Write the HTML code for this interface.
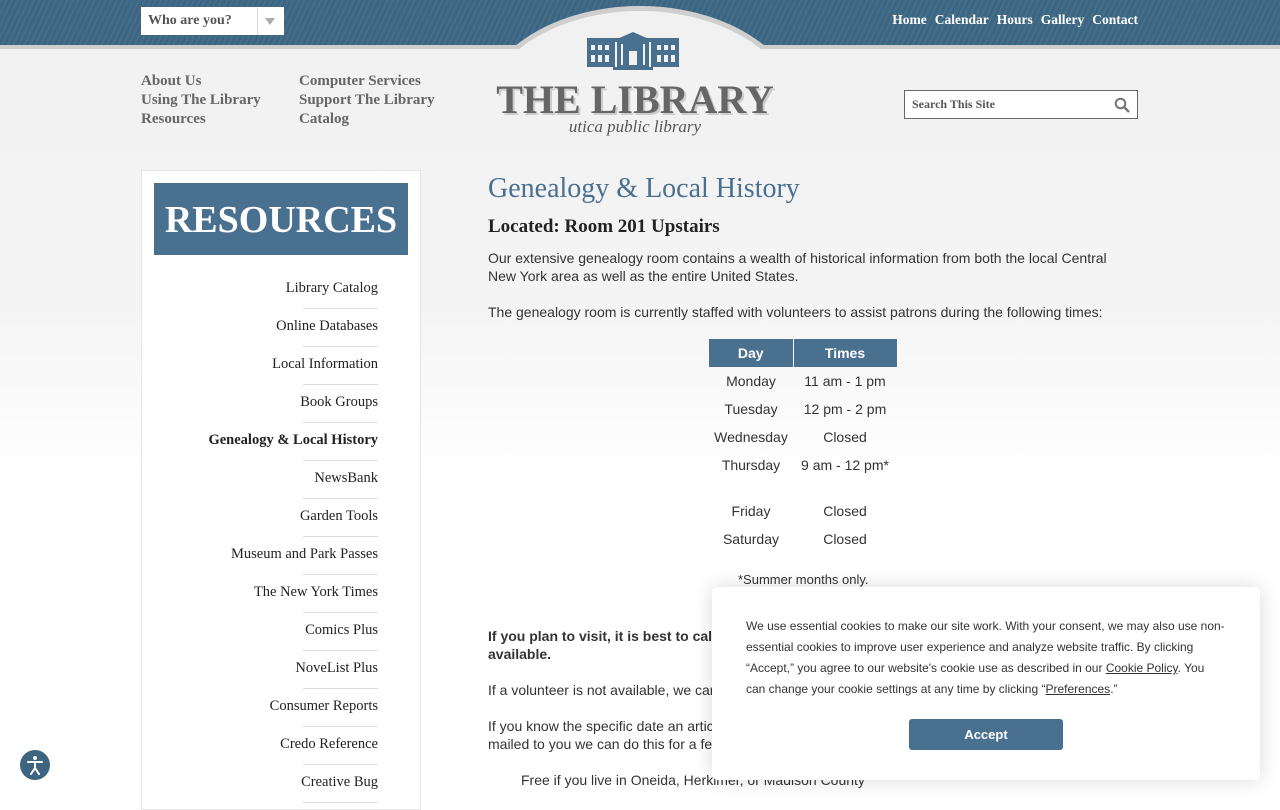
<!DOCTYPE html>
<html><head><meta charset="utf-8"><style>
*{margin:0;padding:0;box-sizing:border-box}
html{background:#fff}
body{width:1280px;height:800px;overflow:hidden;background:linear-gradient(#f1f1f1,#f4f4f4 300px,#fff 480px);font-family:"Liberation Sans",sans-serif;position:relative}
.top{position:absolute;left:0;top:0;width:1280px;height:49px;background:#3b6582 repeating-linear-gradient(115deg,rgba(255,255,255,.06) 0 2px,transparent 2px 5px);border-bottom:4px solid #cfcfcf}
.arcw{position:absolute;left:440px;top:0;width:400px;height:49px;overflow:hidden}
.arc{position:absolute;left:38px;top:6px;width:324px;height:220px;border-radius:50%;background:#f1f1f1;border:5px solid #cfcfcf}
.who{position:absolute;left:141px;top:7px;width:143px;height:28px;background:#fff;font:bold 14px "Liberation Serif",serif;color:#555;padding:6px 7px}
.who:after{content:"";position:absolute;left:116px;top:0;width:1px;height:28px;background:#ddd}
.who i{position:absolute;left:124px;top:11px;border:5px solid transparent;border-top:7px solid #aaa}
.nav{position:absolute;right:142px;top:12px;font:bold 13.5px "Liberation Serif",serif;color:#fff}
.nav span{margin-left:8px}
.sub{position:absolute;top:72px;font:bold 15px/19px "Liberation Serif",serif;color:#666}
.logo{position:absolute;left:475px;top:76px;width:320px;text-align:center;font:bold 40px "Liberation Serif",serif;color:#666;text-shadow:2px 2px 0 #ccc;white-space:nowrap}
.tag{position:absolute;left:495px;top:117px;width:280px;text-align:center;font:italic 17px "Liberation Serif",serif;color:#555}
.search{position:absolute;left:904px;top:90px;width:234px;height:29px;border:1px solid #666;background:#fff;font:bold 12px "Liberation Serif",serif;color:#555;padding:6px 7px}
.side{position:absolute;left:141px;top:170px;width:280px;height:640px;background:#fff;border:1px solid #e6e6e6}
.res{position:absolute;left:12px;top:12px;width:254px;height:72px;background:#4a7090;color:#fff;font:bold 38px/74px "Liberation Serif",serif;text-align:center}
.links{position:absolute;right:42px;top:100px;text-align:right;width:240px}
.links div{height:38px;font:14.5px/35px "Liberation Serif",serif;color:#222;border-bottom:1px solid #ddd;margin-left:165px;white-space:nowrap;direction:rtl}
.main{position:absolute;left:488px;top:172px;width:625px;color:#333;font-size:14px;line-height:18px}
h1{font:28px/34px "Liberation Serif",serif;color:#4a7090;height:40px}
h2{font:bold 19px/30px "Liberation Serif",serif;color:#222;height:37px}
p{margin-bottom:18px}
table{border-collapse:collapse;margin-left:221px;text-align:center}
th{background:#4a7090;color:#fff;font-size:14px;height:28px;border-right:1px solid #fff}
td{height:28px}
.cookie{position:absolute;left:712px;top:587px;width:548px;height:193px;background:#fff;border-radius:6px;box-shadow:0 0 20px rgba(0,0,0,.15);padding:29px 34px;font-size:12px;line-height:21px;color:#333}
.btn{position:absolute;left:197px;top:132px;width:154px;height:31px;background:#4a7090;border-radius:3px;color:#fff;font:bold 13px/31px "Liberation Sans",sans-serif;text-align:center}
.acc{position:absolute;left:20px;top:750px;width:30px;height:30px;border-radius:50%;background:#3f6480}
</style></head><body>
<div class="top"></div>
<div class="arcw"><div class="arc"></div></div>
<svg style="position:absolute;left:587px;top:31px" width="92" height="40" viewBox="0 0 92 40"><g fill="#4a7090"><polygon points="30,8 46,1 62,8"/><rect x="0" y="7" width="92" height="4"/><rect x="0" y="11" width="28" height="25"/><rect x="64" y="11" width="28" height="25"/><rect x="30" y="9" width="32" height="27"/><rect x="26" y="36" width="40" height="3"/></g><g fill="#f1f1f1"><rect x="4" y="14" width="4" height="5"/><rect x="11" y="14" width="4" height="5"/><rect x="18" y="14" width="4" height="5"/><rect x="70" y="14" width="4" height="5"/><rect x="77" y="14" width="4" height="5"/><rect x="84" y="14" width="4" height="5"/><rect x="4" y="24" width="4" height="7"/><rect x="11" y="24" width="4" height="7"/><rect x="18" y="24" width="4" height="7"/><rect x="70" y="24" width="4" height="7"/><rect x="77" y="24" width="4" height="7"/><rect x="84" y="24" width="4" height="7"/><rect x="34" y="13" width="2" height="21"/><rect x="56" y="13" width="2" height="21"/><rect x="42" y="20" width="8" height="14"/></g></svg>
<div class="who">Who are you?<i></i></div>
<div class="nav"><span>Home</span><span>Calendar</span><span>Hours</span><span>Gallery</span><span>Contact</span></div>
<div class="sub" style="left:141px">About Us<br>Using The Library<br>Resources</div>
<div class="sub" style="left:299px">Computer Services<br>Support The Library<br>Catalog</div>
<div class="logo">THE LIBRARY</div>
<div class="tag">utica public library</div>
<div class="search">Search This Site<svg style="position:absolute;right:7px;top:6px" width="16" height="16" viewBox="0 0 16 16"><circle cx="6.5" cy="6.5" r="4.8" fill="none" stroke="#777" stroke-width="2"/><line x1="10" y1="10" x2="15" y2="15" stroke="#777" stroke-width="2.5"/></svg></div>
<div class="side"><div class="res">RESOURCES</div>
<div class="links">
<div>Library Catalog</div><div>Online Databases</div><div>Local Information</div><div>Book Groups</div><div style="font-weight:bold;margin-left:0;border-bottom-color:#fff;position:relative"><span style="position:absolute;right:0;bottom:-1px;width:75px;border-bottom:1px solid #ddd"></span>Genealogy &amp; Local History</div><div>NewsBank</div><div>Garden Tools</div><div>Museum and Park Passes</div><div>The New York Times</div><div>Comics Plus</div><div>NoveList Plus</div><div>Consumer Reports</div><div>Credo Reference</div><div>Creative Bug</div>
</div></div>
<div class="main">
<h1>Genealogy &amp; Local History</h1>
<h2>Located: Room 201 Upstairs</h2>
<p>Our extensive genealogy room contains a wealth of historical information from both the local Central New York area as well as the entire United States.</p>
<p>The genealogy room is currently staffed with volunteers to assist patrons during the following times:</p>
<table><tr><th style="width:84px">Day</th><th style="width:104px">Times</th></tr>
<tr><td>Monday</td><td>11 am - 1 pm</td></tr><tr><td>Tuesday</td><td>12 pm - 2 pm</td></tr><tr><td>Wednesday</td><td>Closed</td></tr><tr><td style="height:46px;vertical-align:top;padding-top:5px">Thursday</td><td style="vertical-align:top;padding-top:5px">9 am - 12 pm*</td></tr><tr><td>Friday</td><td>Closed</td></tr><tr><td>Saturday</td><td>Closed</td></tr></table>
<p style="margin:18px 0 0 250px;font-size:13px">*Summer months only.</p>
<p style="margin-top:38px;font-weight:bold">If you plan to visit, it is best to call ahead to ensure that a genealogy volunteer will be available.</p>
<p>If a volunteer is not available, we can assist you by phone, email, or in person.</p>
<p>If you know the specific date an article appeared in the newspaper and would like it copied and mailed to you we can do this for a fee:</p>
<p style="margin-left:33px">Free if you live in Oneida, Herkimer, or Madison County</p>
</div>
<div class="cookie">We use essential cookies to make our site work. With your consent, we may also use non-essential cookies to improve user experience and analyze website traffic. By clicking “Accept,” you agree to our website's cookie use as described in our <u>Cookie Policy</u>. You can change your cookie settings at any time by clicking “<u>Preferences</u>.”<div class="btn">Accept</div></div>
<div class="acc"><svg width="30" height="30" viewBox="0 0 30 30"><circle cx="15" cy="8" r="2" fill="#fff"/><path d="M8 12 L22 12 M15 12 L15 18 M15 18 L11 24 M15 18 L19 24" stroke="#fff" stroke-width="2" fill="none" stroke-linecap="round"/></svg></div>
</body></html>
